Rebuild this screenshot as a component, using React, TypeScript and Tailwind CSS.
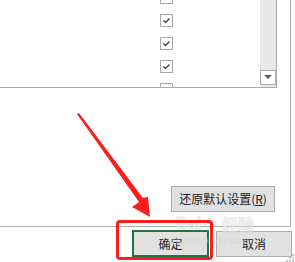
import React from "react";

const Check = () => (
  <div className="w-[13px] h-[13px] border border-[#a9a9a9] bg-white flex items-center justify-center">
    <svg width="11" height="11" viewBox="0 0 11 11">
      <path d="M2.5 5.5 L4.5 7.5 L8.5 3.5" fill="none" stroke="#333" strokeWidth="1.2" />
    </svg>
  </div>
);

export default function App() {
  const font = { fontFamily: '"Noto Sans CJK SC", "Liberation Sans", sans-serif' };
  return (
    <div className="relative w-[295px] h-[262px] bg-white overflow-hidden text-[12px] text-[#222]" style={font}>
      {/* top panel */}
      <div className="w-[291px] h-[227px] border-r border-b border-[#acacac] flex flex-col">
        <div className="w-[277px] h-[88px] border-r border-b border-[#acacac] flex">
          <div className="flex-1 overflow-hidden">
            <div className="ml-[160px] -mt-[9px] flex flex-col gap-[10px]">
              <Check />
              <Check />
              <Check />
              <Check />
              <Check />
            </div>
          </div>
          <div className="w-[16px] bg-[#e8e8e8] flex flex-col justify-end">
            <div className="h-[15px] mb-[2px] border border-[#acacac] bg-white flex items-center justify-center">
              <svg width="8" height="5" viewBox="0 0 8 5">
                <path d="M0 0 H8 L4 4 Z" fill="#606060" />
              </svg>
            </div>
          </div>
        </div>
        <div className="flex-1" />
        <div className="flex justify-end mr-[15px] mb-[14px]">
          <div className="w-[104px] h-[26px] border border-[#adadad] bg-[#e1e1e1] flex items-center justify-center">
            还原默认设置(<span className="underline">R</span>)
          </div>
        </div>
      </div>
      {/* bottom buttons */}
      <div className="flex mt-[3px] ml-[132px] gap-[7px]">
        <div className="w-[77px] h-[27px] border-2 border-[#217346] bg-[#e1e1e1] flex items-center justify-center">
          确定
        </div>
        <div className="w-[76px] h-[26px] mt-[1px] border border-[#adadad] bg-[#e1e1e1] flex items-center justify-center">
          取消
        </div>
      </div>
      {/* watermark */}
      <div className="absolute left-[176px] top-[216px] flex items-end gap-[2px] text-[16px] font-bold text-white opacity-60 leading-none" style={{ WebkitTextStroke: "1px #d8d8d8", fontFamily: '"Liberation Sans", sans-serif' }}>
        <span>Bai</span>
        <svg width="14" height="14" viewBox="0 0 14 14">
          <g fill="none" stroke="#d8d8d8" strokeWidth="1">
            <ellipse cx="3" cy="5" rx="1.6" ry="2" />
            <ellipse cx="6" cy="2.5" rx="1.6" ry="2" />
            <ellipse cx="9.5" cy="2.5" rx="1.6" ry="2" />
            <ellipse cx="12" cy="5.5" rx="1.6" ry="2" />
            <path d="M4 12 Q7 6 10.5 12 Z" />
          </g>
        </svg>
        <span className="ml-[3px]" style={font}>经验</span>
      </div>
      <div className="absolute left-[168px] top-[236px] text-[10px] text-[#d4d4d4] opacity-60 leading-none" style={{ fontFamily: '"Liberation Sans", sans-serif' }}>
        jingyan.baidu.com
      </div>
      {/* resize grip */}
      <svg className="absolute left-[286px] top-[254px]" width="9" height="8" viewBox="0 0 9 8">
        <rect x="6" y="0" width="2" height="2" fill="#c8c8c8" />
        <rect x="3" y="3" width="2" height="2" fill="#c8c8c8" />
        <rect x="6" y="3" width="2" height="2" fill="#c8c8c8" />
        <rect x="0" y="6" width="2" height="2" fill="#c8c8c8" />
        <rect x="3" y="6" width="2" height="2" fill="#c8c8c8" />
        <rect x="6" y="6" width="2" height="2" fill="#c8c8c8" />
      </svg>
      {/* red highlight box */}
      <div className="absolute left-[116px] top-[220px] w-[97px] h-[40px] border-[3px] border-[#fa1e1e] rounded-[4px]" />
      {/* red arrow */}
      <svg className="absolute left-0 top-0" width="295" height="262" viewBox="0 0 295 262">
        <polygon points="77,114 79,113 143,198 148,197 150,217 132,207 139,202" fill="#fa1e1e" />
      </svg>
    </div>
  );
}
